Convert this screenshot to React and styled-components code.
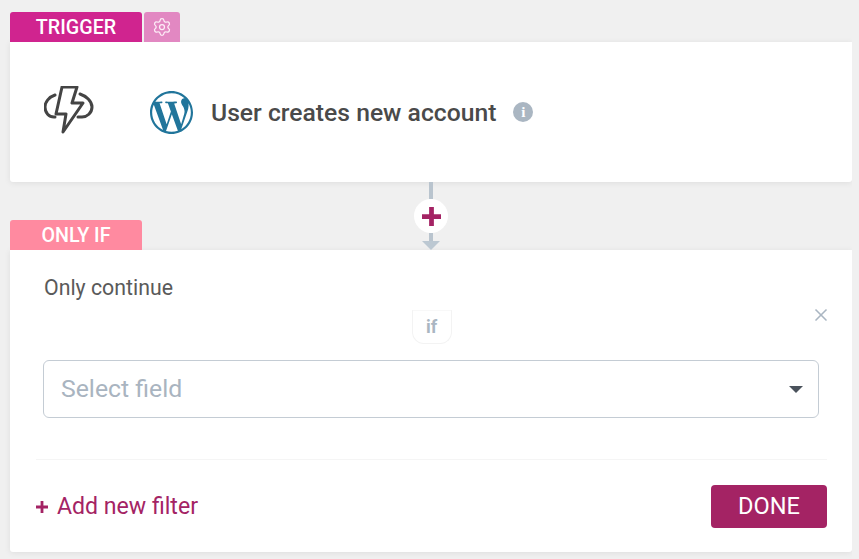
import React from 'react'
import styled, { createGlobalStyle } from 'styled-components'
import { SiWordpress } from 'react-icons/si'
import { Settings, X } from 'lucide-react'

const Global = createGlobalStyle`
  html, body { margin: 0; background: #f0f0f0; }
  body { font-family: Roboto, "Liberation Sans", sans-serif; }
`

const Page = styled.div`
  width: 852px;
  height: 559px;
  padding: 12px 0 0 10px;
  box-sizing: border-box;
  overflow: hidden;
`

const TabRow = styled.div`
  display: flex;
  gap: 2px;
  height: 30px;
`

const Tab = styled.div`
  width: 132px;
  height: 30px;
  border-radius: 3px 3px 0 0;
  background: ${props => props.color};
  color: #fff;
  font-size: 19.7px;
  font-weight: 500;
  line-height: 32px;
  text-align: center;
`

const GearTab = styled.div`
  width: 36px;
  height: 30px;
  border-radius: 3px 3px 0 0;
  background: #e288c2;
  color: #fdeef7;
  display: flex;
  align-items: center;
  justify-content: center;
`

const Card = styled.div`
  background: #fff;
  border-radius: 0 0 3px 3px;
  box-shadow: 0 1px 6px rgba(0, 0, 0, 0.08);
`

const TriggerCard = styled(Card)`
  height: 140px;
  display: flex;
  align-items: center;
  padding-left: 34px;
  box-sizing: border-box;
`

const TriggerIcon = styled.svg`
  width: 50px;
  height: 48px;
  margin: -5px 56px 0 0;
  flex: none;
  fill: none;
  stroke: #444;
  stroke-width: 3;
  stroke-linejoin: round;
  stroke-linecap: round;
`

const AppLogo = styled(SiWordpress)`
  width: 43px;
  height: 43px;
  color: #21759b;
  margin-right: 18px;
  flex: none;
`

const TriggerTitle = styled.div`
  color: #4a4a4a;
  font-size: 24.7px;
  font-weight: 500;
  margin-top: 1px;
`

const InfoBadge = styled.div`
  width: 20px;
  height: 20px;
  margin: 0 0 0 17px;
  border-radius: 50%;
  background: #aab6c2;
  color: #fff;
  font-family: "Liberation Serif", serif;
  font-size: 15px;
  font-weight: 700;
  line-height: 20px;
  text-align: center;
`

const Junction = styled.div`
  height: 68px;
  display: grid;
`

const JunctionTab = styled(Tab)`
  grid-area: 1 / 1;
  align-self: end;
  justify-self: start;
`

const Connector = styled.div`
  grid-area: 1 / 1;
  justify-self: center;
  display: flex;
  flex-direction: column;
  align-items: center;
`

const Line = styled.div`
  width: 4px;
  height: ${props => props.size}px;
  background: #b9c4ce;
`

const PlusButton = styled.div`
  width: 34px;
  height: 34px;
  flex: none;
  border-radius: 50%;
  background: #fff;
  display: flex;
  align-items: center;
  justify-content: center;
`

const PlusIcon = styled.svg`
  width: 19px;
  height: 19px;
  fill: #a42364;
`

const ArrowHead = styled.div`
  width: 0;
  height: 0;
  border-left: 9px solid transparent;
  border-right: 9px solid transparent;
  border-top: 9px solid #bcc8d2;
`

const FilterCard = styled(Card)`
  height: 302px;
  padding: 26px 25px 0 26px;
  box-sizing: border-box;
`

const FilterLabel = styled.div`
  margin-left: 8px;
  color: #5a5a5a;
  font-size: 21.3px;
  line-height: 24px;
`

const IfRow = styled.div`
  height: 34px;
  margin: 10px 8px 0;
  display: flex;
  justify-content: center;
  align-items: flex-start;
  position: relative;
`

const IfBadge = styled.div`
  width: 38px;
  height: 32px;
  border: 1px solid #f3f3f3;
  border-top-color: #f8f8f8;
  border-radius: 0 0 12px 12px;
  color: #aab6c2;
  font-size: 18px;
  font-weight: 700;
  line-height: 31px;
  text-align: center;
`

const CloseIcon = styled(X)`
  position: absolute;
  right: -12px;
  top: -5px;
  color: #aab6c2;
`

const Select = styled.div`
  height: 56px;
  margin: 16px 8px 0 7px;
  padding: 0 15px 0 17px;
  border: 1px solid #c4ccd4;
  border-radius: 6px;
  display: flex;
  align-items: center;
  justify-content: space-between;
`

const Placeholder = styled.div`
  color: #a9b4c0;
  font-size: 24.8px;
  margin-top: -2px;
`

const Caret = styled.div`
  width: 0;
  height: 0;
  border-left: 7px solid transparent;
  border-right: 7px solid transparent;
  border-top: 7px solid #4a525c;
`

const Footer = styled.div`
  margin-top: 41px;
  padding-top: 25px;
  border-top: 1px solid #f5f5f5;
  display: flex;
  align-items: center;
  justify-content: space-between;
`

const AddFilter = styled.div`
  display: flex;
  align-items: center;
  gap: 9px;
  color: #a42364;
  font-size: 23.1px;
`

const AddIcon = styled.svg`
  width: 12px;
  height: 12px;
  fill: #a42364;
`

const DoneButton = styled.div`
  width: 116px;
  height: 43px;
  border-radius: 4px;
  background: #a42364;
  color: #fff;
  font-size: 23.6px;
  line-height: 43px;
  text-align: center;
`

const App = () => {
  return (
    <Page>
      <Global />
      <TabRow>
        <Tab color="#d0248f">TRIGGER</Tab>
        <GearTab>
          <Settings size={20} strokeWidth={1.5} />
        </GearTab>
      </TabRow>
      <TriggerCard>
        <TriggerIcon viewBox="0 0 50 48">
          <path d="M18 1 H33 L28 17 H39 L19 46 L22 28 H12 Z" />
          <path d="M11 9 C5 11 1 16 1 21 C1 27 5 31 10 31 H11" />
          <path d="M36 8 C42 10 48 15 48 21 C48 27 43 31 38 31 H34" />
        </TriggerIcon>
        <AppLogo />
        <TriggerTitle>User creates new account</TriggerTitle>
        <InfoBadge>i</InfoBadge>
      </TriggerCard>
      <Junction>
        <JunctionTab color="#ff8aa0">ONLY IF</JunctionTab>
        <Connector>
          <Line size={17} />
          <PlusButton>
            <PlusIcon viewBox="0 0 20 20">
              <path d="M7.5 0 H12.5 V7.5 H20 V12.5 H12.5 V20 H7.5 V12.5 H0 V7.5 H7.5 Z" />
            </PlusIcon>
          </PlusButton>
          <Line size={8} />
          <ArrowHead />
        </Connector>
      </Junction>
      <FilterCard>
        <FilterLabel>Only continue</FilterLabel>
        <IfRow>
          <IfBadge>if</IfBadge>
          <CloseIcon size={20} strokeWidth={2} />
        </IfRow>
        <Select>
          <Placeholder>Select field</Placeholder>
          <Caret />
        </Select>
        <Footer>
          <AddFilter>
            <AddIcon viewBox="0 0 12 12">
              <path d="M4.6 0 H7.4 V4.6 H12 V7.4 H7.4 V12 H4.6 V7.4 H0 V4.6 H4.6 Z" />
            </AddIcon>
            Add new filter
          </AddFilter>
          <DoneButton>DONE</DoneButton>
        </Footer>
      </FilterCard>
    </Page>
  )
}

export default App
